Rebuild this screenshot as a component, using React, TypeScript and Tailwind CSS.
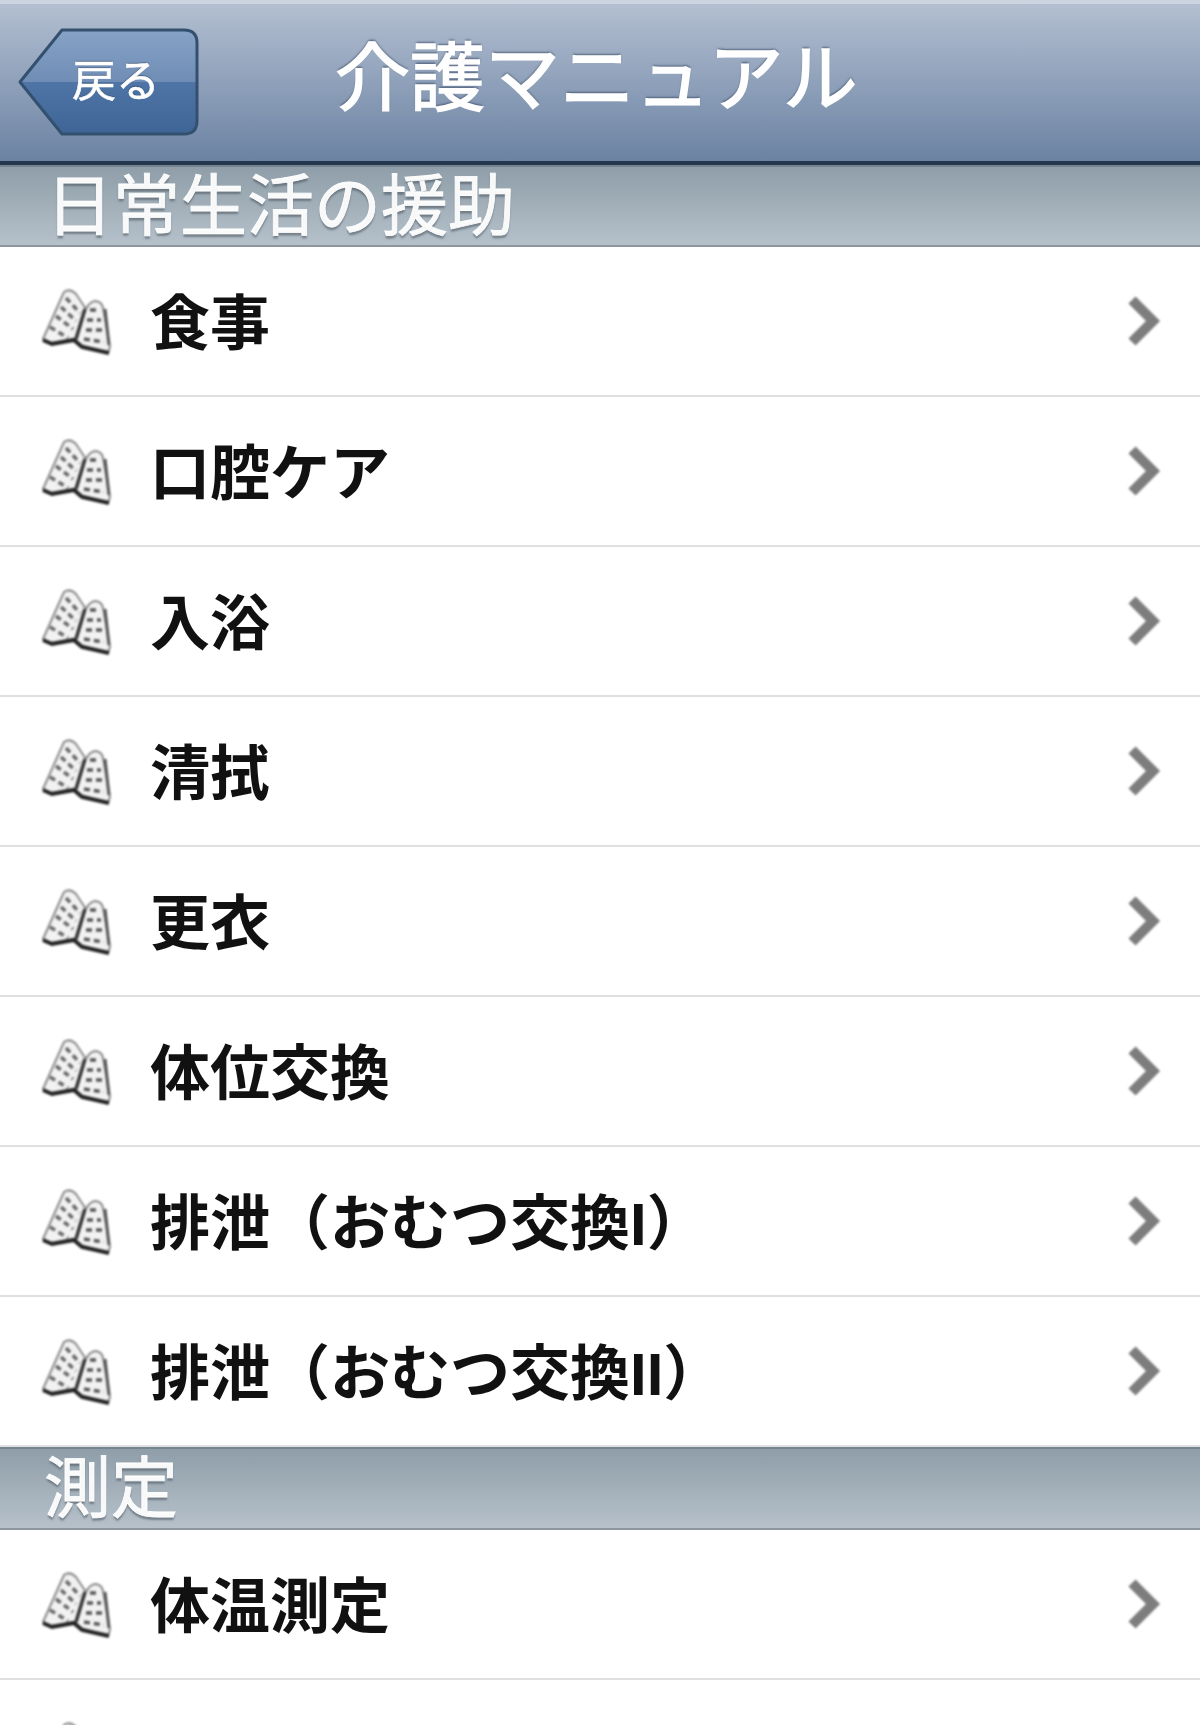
const font = "font-['Liberation_Sans','Noto_Sans_CJK_JP',sans-serif]";

const daily = ["食事", "口腔ケア", "入浴", "清拭", "更衣", "体位交換", "排泄（おむつ交換I）", "排泄（おむつ交換II）"];
const measure = ["体温測定"];

function BookIcon() {
  return (
    <svg viewBox="0 0 72 68" className="w-[72px] h-[68px] shrink-0 blur-[1px]">
      <path d="M3 52 L24 5 Q30 1 36 7 L46 22 Q50 14 56 14 Q62 15 63 21 L70 60 L68 66 L40 58 L34 52 L10 56 Z" fill="#f2f2f2" stroke="#8a8a8a" strokeWidth="2" strokeLinejoin="round" />
      <path d="M26 11 L40 26 M21 20 L36 34 M16 29 L33 42 M10 40 L28 51" stroke="#666" strokeWidth="3.5" strokeDasharray="6 4" fill="none" />
      <path d="M50 23 L60 23 M47 33 L61 33 M46 43 L63 43 M44 52 L64 55" stroke="#555" strokeWidth="3.5" strokeDasharray="6 4" fill="none" />
      <path d="M36 52 L45 22" stroke="#333" strokeWidth="3.5" />
      <path d="M3 53 L12 57 L34 53 L42 60 L69 66" stroke="#222" strokeWidth="4" fill="none" />
      <path d="M65 22 L69 58" stroke="#555" strokeWidth="3" />
    </svg>
  );
}

function Chevron() {
  return (
    <svg viewBox="0 0 36 52" className="w-[36px] h-[52px] shrink-0 blur-[0.8px]">
      <path d="M6 5 L27 26 L6 47" fill="none" stroke="#7d7d7d" strokeWidth="10" strokeLinejoin="miter" />
    </svg>
  );
}

function SectionHeader({ title, pad, height }: { title: string; pad: string; height: string }) {
  return (
    <div className={`${height} flex items-center ${pad} bg-gradient-to-b from-[#8f9ea9] to-[#b6c1ca] border-t-2 border-t-[#75858f] border-b-2 border-b-[#8d969e]`}>
      <span className="text-[67px] leading-none text-white/95 [-webkit-text-stroke:0.8px_white] [text-shadow:0_3px_2px_rgba(70,80,90,0.55)] blur-[0.7px]">{title}</span>
    </div>
  );
}

function Row({ label }: { label: string }) {
  return (
    <div className="h-[150px] flex items-center bg-white border-b-2 border-b-[#e0e0e0] pl-[40px] pr-[38px]">
      <BookIcon />
      <span className="ml-[38px] mt-[7px] flex-1 text-[60px] leading-none font-bold text-[#111] blur-[0.7px]">{label}</span>
      <Chevron />
    </div>
  );
}

export default function App() {
  return (
    <div className={`w-[1200px] h-[1725px] overflow-hidden bg-white ${font}`}>
      <div className="h-[165px] flex items-center bg-gradient-to-b from-[#b3bfd1] to-[#6c83a3] border-t-4 border-t-[#ccd4e0] border-b-[4px] border-b-[#25364f] pl-[18px]">
        <div className="relative w-[182px] h-[110px] mt-[-2px] flex items-center justify-center pl-[14px]">
          <svg viewBox="0 0 182 110" className="absolute inset-0 w-full h-full">
            <defs>
              <linearGradient id="backFill" x1="0" y1="0" x2="0" y2="1">
                <stop offset="0" stopColor="#87a2c6" />
                <stop offset="0.5" stopColor="#6f8db5" />
                <stop offset="0.5" stopColor="#4f75a6" />
                <stop offset="1" stopColor="#3f6597" />
              </linearGradient>
            </defs>
            <path d="M2 55 L44 3 H166 Q179 3 179 16 V94 Q179 107 166 107 H44 Z" fill="url(#backFill)" stroke="#34506f" strokeWidth="3" strokeLinejoin="round" />
          </svg>
          <span className="relative text-[44px] leading-none text-white [-webkit-text-stroke:0.6px_white] [text-shadow:0_-1px_1px_rgba(30,50,80,0.6)] blur-[0.7px]">戻る</span>
        </div>
        <span className="ml-[135px] mt-[-6px] text-[75px] leading-none text-white [-webkit-text-stroke:1.4px_white] [text-shadow:0_-2px_2px_rgba(50,65,90,0.6)] blur-[0.7px]">介護マニュアル</span>
      </div>

      <SectionHeader title="日常生活の援助" pad="pl-[46px]" height="h-[82px]" />
      {daily.map((label) => (
        <Row key={label} label={label} />
      ))}

      <SectionHeader title="測定" pad="pl-[44px]" height="h-[83px]" />
      {measure.map((label) => (
        <Row key={label} label={label} />
      ))}
      <div className="flex pl-[40px] pt-[40px]">
        <BookIcon />
      </div>
    </div>
  );
}
